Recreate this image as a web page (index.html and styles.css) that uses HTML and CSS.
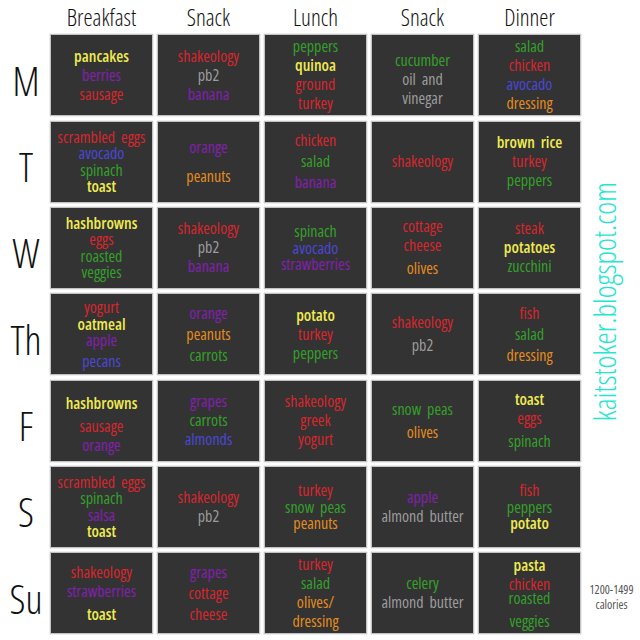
FILE: index.html
```html
<!DOCTYPE html>
<html>
<head>
<meta charset="utf-8">
<link rel="stylesheet" href="styles.css">
</head>
<body>
<div class="page">
  <div class="corner"></div>
  <div class="head">Breakfast</div>
  <div class="head">Snack</div>
  <div class="head">Lunch</div>
  <div class="head">Snack</div>
  <div class="head">Dinner</div>

  <div class="side">
    <div class="blog">kaitstoker.blogspot.com</div>
    <div class="cal"><span>1200-1499</span><span>calories</span></div>
  </div>

  <div class="day">M</div>
  <div class="box"><span class="y">pancakes</span><span class="p">berries</span><span class="r">sausage</span></div>
  <div class="box"><span class="r">shakeology</span><span class="g">pb2</span><span class="p">banana</span></div>
  <div class="box"><span class="gr">peppers</span><span class="y">quinoa</span><span class="r">ground</span><span class="r">turkey</span></div>
  <div class="box down"><span class="gr">cucumber</span><span class="g">oil &nbsp;and</span><span class="g">vinegar</span></div>
  <div class="box"><span class="gr">salad</span><span class="r">chicken</span><span class="b">avocado</span><span class="o">dressing</span></div>

  <div class="day">T</div>
  <div class="box tight"><span class="r">scrambled &nbsp;eggs</span><span class="b">avocado</span><span class="gr">spinach</span><span class="y">toast</span></div>
  <div class="box"><span class="p">orange</span><span class="o gap10">peanuts</span></div>
  <div class="box loose"><span class="r">chicken</span><span class="gr">salad</span><span class="p">banana</span></div>
  <div class="box"><span class="r">shakeology</span></div>
  <div class="box"><span class="y">brown &nbsp;rice</span><span class="r">turkey</span><span class="gr">peppers</span></div>

  <div class="day">W</div>
  <div class="box tight"><span class="y">hashbrowns</span><span class="r">eggs</span><span class="gr">roasted</span><span class="gr">veggies</span></div>
  <div class="box"><span class="r">shakeology</span><span class="g">pb2</span><span class="p">banana</span></div>
  <div class="box tight"><span class="gr">spinach</span><span class="b">avocado</span><span class="p">strawberries</span></div>
  <div class="box"><span class="r">cottage</span><span class="r">cheese</span><span class="o gap4">olives</span></div>
  <div class="box"><span class="r">steak</span><span class="y">potatoes</span><span class="gr">zucchini</span></div>

  <div class="day">Th</div>
  <div class="box tight"><span class="r">yogurt</span><span class="y">oatmeal</span><span class="p">apple</span><span class="b gap4">pecans</span></div>
  <div class="box loose"><span class="p">orange</span><span class="o">peanuts</span><span class="gr">carrots</span></div>
  <div class="box"><span class="y">potato</span><span class="r">turkey</span><span class="gr">peppers</span></div>
  <div class="box"><span class="r">shakeology</span><span class="g gap4">pb2</span></div>
  <div class="box loose"><span class="r">fish</span><span class="gr">salad</span><span class="o">dressing</span></div>

  <div class="day">F</div>
  <div class="box down"><span class="y">hashbrowns</span><span class="r gap4">sausage</span><span class="p">orange</span></div>
  <div class="box"><span class="p">grapes</span><span class="gr">carrots</span><span class="b">almonds</span></div>
  <div class="box"><span class="r">shakeology</span><span class="r">greek</span><span class="r">yogurt</span></div>
  <div class="box"><span class="gr">snow &nbsp;peas</span><span class="o gap4">olives</span></div>
  <div class="box"><span class="y">toast</span><span class="r">eggs</span><span class="gr gap4">spinach</span></div>

  <div class="day">S</div>
  <div class="box tight"><span class="r">scrambled &nbsp;eggs</span><span class="gr">spinach</span><span class="p">salsa</span><span class="y">toast</span></div>
  <div class="box"><span class="r">shakeology</span><span class="g">pb2</span></div>
  <div class="box tight"><span class="r">turkey</span><span class="gr">snow &nbsp;peas</span><span class="o">peanuts</span></div>
  <div class="box"><span class="p">apple</span><span class="g">almond &nbsp;butter</span></div>
  <div class="box tight"><span class="r">fish</span><span class="gr">peppers</span><span class="y">potato</span></div>

  <div class="day">Su</div>
  <div class="box"><span class="r">shakeology</span><span class="p">strawberries</span><span class="y gap4">toast</span></div>
  <div class="box loose"><span class="p">grapes</span><span class="r">cottage</span><span class="r">cheese</span></div>
  <div class="box"><span class="r">turkey</span><span class="gr">salad</span><span class="o">olives/</span><span class="o">dressing</span></div>
  <div class="box"><span class="gr">celery</span><span class="g">almond &nbsp;butter</span></div>
  <div class="box"><span class="y">pasta</span><span class="r">chicken</span><span class="gr squeeze">roasted</span><span class="gr gap4">veggies</span></div>
</div>
</body>
</html>
```

FILE: styles.css
```css
html, body {
  margin: 0;
  padding: 0;
  background: #ffffff;
}

.page {
  width: 640px;
  height: 640px;
  display: grid;
  grid-template-columns: 46px repeat(5, 103px) 55px;
  grid-template-rows: 30px repeat(7, 82px);
  column-gap: 4px;
  row-gap: 4.33px;
  font-family: "Open Sans", "DejaVu Sans Condensed", sans-serif;
  font-stretch: 75%;
}

.corner { grid-column: 1; grid-row: 1; }

.head {
  grid-row: 1;
  display: flex;
  align-items: flex-end;
  justify-content: center;
  font-weight: 300;
  font-size: 23px;
  line-height: 26px;
  color: #111;
  padding-bottom: 0;
}

.day {
  grid-column: 1;
  display: flex;
  align-items: center;
  justify-content: center;
  padding-left: 6px;
  padding-top: 10px;
  font-weight: 300;
  font-size: 40px;
  color: #111;
}

.box {
  background: #333333;
  border: 1px solid #c2c2c2;
  box-shadow: 0 0 1px #9a9a9a;
  display: flex;
  flex-direction: column;
  align-items: center;
  justify-content: center;
  font-size: 16px;
  line-height: 19px;
}

.box.tight { line-height: 16.5px; }
.box.loose { line-height: 21px; }
.box.down { padding-top: 8px; }

.gap4 { margin-top: 4px; }
.gap10 { margin-top: 10px; }
.squeeze { margin-top: -5px; }

.box span { white-space: nowrap; }

.y { color: #eeea52; font-weight: 600; }
.p { color: #8320b0; }
.r { color: #d8262e; }
.g { color: #9c9c9c; }
.gr { color: #34a02a; }
.b { color: #4a48d6; }
.o { color: #e38c1f; }

.side {
  grid-column: 7;
  grid-row: 2 / span 7;
  display: flex;
  flex-direction: column;
  align-items: center;
  padding-top: 148px;
  padding-bottom: 22px;
}

.blog {
  writing-mode: vertical-rl;
  transform: rotate(180deg);
  color: #22e6cf;
  font-size: 31px;
  line-height: 32px;
  font-weight: 300;
  white-space: nowrap;
  margin-right: 18px;
}

.cal {
  margin-top: auto;
  display: flex;
  flex-direction: column;
  align-items: center;
  font-size: 12px;
  line-height: 15px;
  color: #555;
  white-space: nowrap;
  margin-right: 2px;
}
```
